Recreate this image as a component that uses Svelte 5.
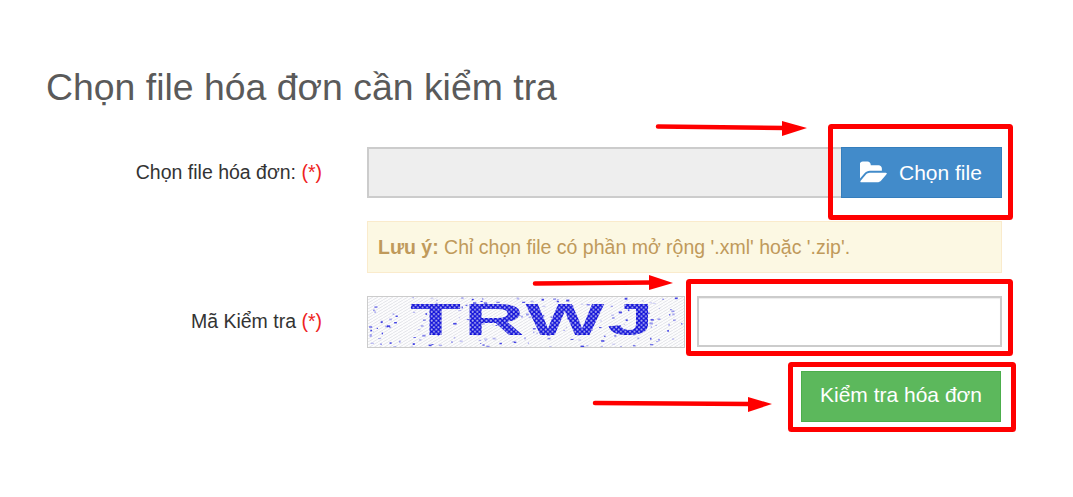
<script>
  // seeded so the captcha noise stays the same between renders
  let seed = 91;
  function rnd() {
    seed = (seed * 1664525 + 1013904223) % 4294967296;
    seed = (seed ^ (seed >>> 13)) >>> 0;
    return seed / 4294967296;
  }

  const specks = Array.from({ length: 190 }, () => ({
    x: rnd() * 316,
    y: rnd() * 50,
    w: 1 + rnd() * 2.5,
    h: 0.8 + rnd() * 1.2,
    o: rnd() < 0.4 ? 0.8 : 0.15 + rnd() * 0.35
  }));

  const boxes = [
    { x: 830.5, y: 126.5, w: 180, h: 91 },
    { x: 688.5, y: 281.5, w: 322, h: 72 },
    { x: 790.5, y: 364.5, w: 223, h: 65 }
  ];

  const arrows = [
    { x1: 658, y1: 126.5, x2: 785, y2: 128, head: '782,121 807,128 782,136' },
    { x1: 535, y1: 283.5, x2: 652, y2: 282.5, head: '649,275 673,283 649,290' },
    { x1: 595, y1: 403, x2: 750, y2: 404, head: '748,397 772,404 748,412' }
  ];
</script>

<div class="page">
  <h2>Chọn file hóa đơn cần kiểm tra</h2>

  <div class="form">
    <label class="lbl" for="file">Chọn file hóa đơn: <span class="req">(*)</span></label>
    <div class="file-group">
      <input id="file" class="file-name" type="text" disabled />
      <button class="btn btn-file" type="button">
        <svg class="folder" viewBox="0 0 1920 1792" aria-hidden="true">
          <path d="M1845 931q0 35-53 93l-336 396q-43 51-120.5 86.5t-143.5 35.5h-1088q-34 0-60.5-13t-26.5-43q0-35 53-93l336-396q43-51 120.5-86.5t143.5-35.5h1088q34 0 60.5 13t26.5 43zm-343-344v160h-832q-94 0-197 47.5t-164 119.5l-337 396-5 6q0-4-.5-12.5t-.5-12.5v-960q0-92 66-158t158-66h320q92 0 158 66t66 158v32h544q92 0 158 66t66 158z" />
        </svg>
        Chọn file
      </button>
    </div>

    <div class="note"><b>Lưu ý:</b> Chỉ chọn file có phần mở rộng '.xml' hoặc '.zip'.</div>

    <label class="lbl" for="code">Mã Kiểm tra <span class="req">(*)</span></label>
    <div class="captcha-group">
      <svg class="captcha" viewBox="0 0 316 50" aria-label="captcha">
        <defs>
          <pattern id="hatch" width="5" height="3" patternUnits="userSpaceOnUse">
            <rect width="5" height="3" fill="#fcfcfd" />
            <path d="M0 3L5 0" stroke="#e4e5e9" stroke-width="1" />
          </pattern>
          <pattern id="cells" width="2.4" height="4.4" patternUnits="userSpaceOnUse">
            <rect width="2.4" height="4.4" fill="#1010d8" />
            <ellipse cx="0.6" cy="1.1" rx="0.55" ry="1" fill="#b2b2f0" />
            <ellipse cx="1.8" cy="3.3" rx="0.55" ry="1" fill="#b2b2f0" />
          </pattern>
        </defs>
        <rect width="316" height="50" fill="url(#hatch)" />
        {#each specks as s}
          <rect x={s.x} y={s.y} width={s.w} height={s.h} fill="#1a1ae0" opacity={s.o} />
        {/each}
        <text class="captcha-text" transform="translate(42 38) scale(1.9 1)" fill="url(#cells)">TRWJ</text>
      </svg>
      <input id="code" class="code" type="text" />
    </div>

    <div class="submit-row">
      <button class="btn btn-submit" type="button">Kiểm tra hóa đơn</button>
    </div>
  </div>

  <svg class="marks" viewBox="0 0 1073 497" aria-hidden="true">
    {#each boxes as b}
      <rect x={b.x} y={b.y} width={b.w} height={b.h} rx="1" fill="none" stroke="#f00" stroke-width="5" />
    {/each}
    {#each arrows as a}
      <line x1={a.x1} y1={a.y1} x2={a.x2} y2={a.y2} stroke="#f00" stroke-width="4.5" stroke-linecap="round" />
      <polygon points={a.head} fill="#f00" />
    {/each}
  </svg>
</div>

<style>
  :global(body) {
    margin: 0;
    background: #fff;
  }

  .page {
    position: relative;
    width: 1073px;
    height: 497px;
    padding: 65px 0 0 46px;
    box-sizing: border-box;
    overflow: hidden;
    font-family: "Liberation Sans", Arial, sans-serif;
    font-size: 19.5px;
    color: #333;
  }

  h2 {
    margin: 0;
    font-size: 37.4px;
    font-weight: 400;
    line-height: 44px;
    color: #5a5a5a;
  }

  .form {
    display: grid;
    grid-template-columns: 276px 635px;
    column-gap: 45px;
    margin-top: 38px;
  }

  .lbl {
    align-self: start;
    padding-top: 13px;
    line-height: 24px;
    text-align: right;
    white-space: nowrap;
  }

  .req {
    color: #e22;
  }

  .file-group {
    display: flex;
    height: 51px;
  }

  .file-name {
    flex: 1;
    min-width: 0;
    margin: 0;
    background: #eee;
    border: 2px solid #ccc;
    border-right: 0;
    box-sizing: border-box;
  }

  .btn {
    margin: 0;
    border-radius: 0;
    color: #fff;
    font-family: inherit;
    font-size: 21px;
    cursor: pointer;
    box-sizing: border-box;
  }

  .btn-file {
    display: flex;
    align-items: center;
    gap: 11px;
    width: 161px;
    padding: 0 0 0 18px;
    background: #428bca;
    border: 1px solid #357ebd;
  }

  .folder {
    width: 28px;
    height: 26px;
    fill: #fff;
  }

  .note {
    grid-column: 2;
    height: 52px;
    margin-top: 23px;
    padding: 0 10px;
    box-sizing: border-box;
    line-height: 50px;
    white-space: nowrap;
    background: #fcf8e3;
    border: 1px solid #faebcc;
    color: #c09a5b;
  }

  .captcha-group {
    display: flex;
    align-items: flex-start;
    gap: 12px;
    margin-top: 23px;
  }

  .lbl:nth-of-type(2) {
    margin-top: 23px;
  }

  .captcha {
    display: block;
    width: 318px;
    height: 52px;
    border: 1px solid #ccc;
    box-sizing: border-box;
  }

  .captcha-text {
    font-family: "Liberation Sans", Arial, sans-serif;
    font-size: 44px;
    font-weight: 700;
    letter-spacing: 1.5px;
  }

  .code {
    width: 305px;
    height: 51px;
    margin: 0;
    padding: 0;
    background: #fff;
    border: 2px solid #ccc;
    box-sizing: border-box;
    box-shadow: inset 0 1px 1px rgba(0, 0, 0, 0.075);
  }

  .submit-row {
    grid-column: 2;
    display: flex;
    justify-content: flex-end;
    margin-top: 23px;
    padding-right: 1px;
  }

  .btn-submit {
    width: 200px;
    height: 51px;
    padding: 0 0 3px;
    background: #5cb85c;
    border: 1px solid #4cae4c;
  }

  .marks {
    position: absolute;
    inset: 0;
    width: 1073px;
    height: 497px;
    pointer-events: none;
  }
</style>
